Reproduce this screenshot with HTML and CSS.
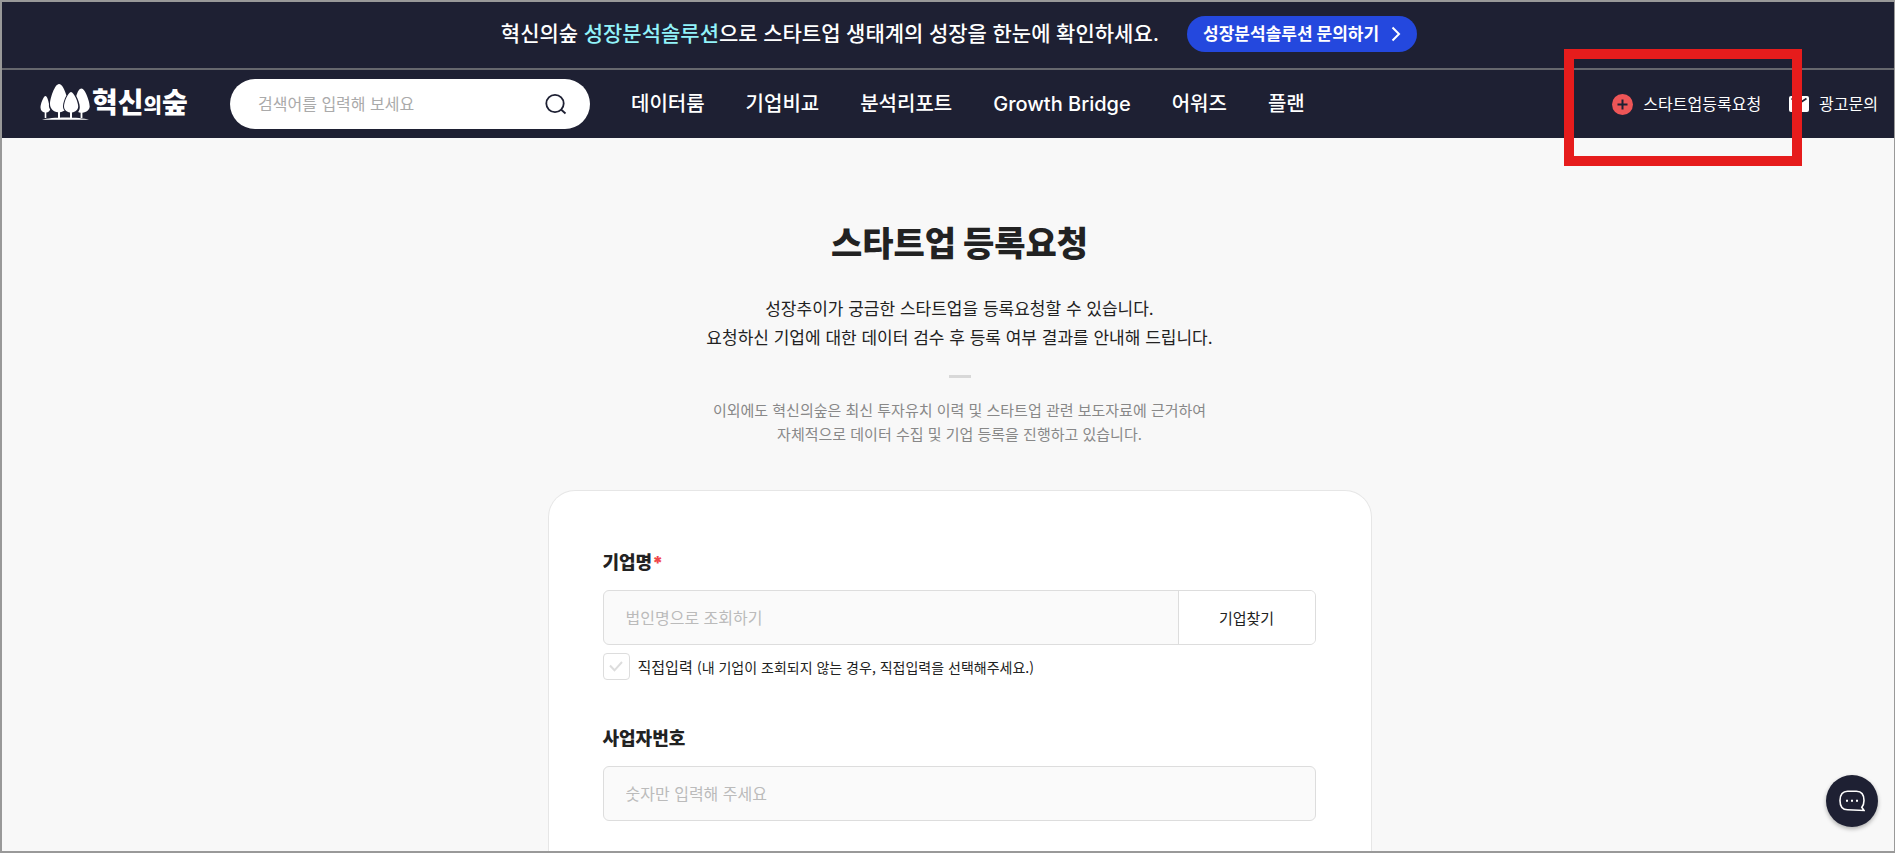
FILE: index.html
```html
<!DOCTYPE html>
<html lang="ko">
<head>
    <meta charset="UTF-8">
    <meta name="viewport" content="width=device-width, initial-scale=1.0">
    <title>스타트업 등록요청 - 혁신의숲</title>
    <link rel="stylesheet" href="styles.css">
</head>
<body>
    <div class="top-banner">
        <p>혁신의숲 <span class="point">성장분석솔루션</span>으로 스타트업 생태계의 성장을 한눈에 확인하세요.</p>
        <a href="#" class="banner-link">성장분석솔루션 문의하기
            <svg width="10" height="16" viewBox="0 0 10 16" fill="none" stroke="#fff" stroke-width="2"><path d="M1.5 1.5 8 8l-6.500 6.500"/></svg>
        </a>
    </div>

    <header class="header">
        <a href="#" class="logo">
            <svg width="50" height="36" viewBox="0 0 50 36" fill="#fff">
                <path d="M5.500 12C3.500 12 .5 20 .5 23.500c0 3 2 4.700 4.200 4.900V34h1.600v-5.600c2-.2 3.400-1.400 3.900-3C9 24 8.800 22 9 20 8.200 16 7 12 5.500 12z"/>
                <path d="M41.500 4.500c-2.300 0-4 3.500-5.200 7.500 1.800 3.500 3.500 8 3.500 11 0 2-.6 3.700-1.700 5 .8.400 1.600.6 2.500.7V34h1.800v-5.300c4-.4 7.300-2.700 7.300-6.500 0-5-4.700-17.700-8.200-17.700z"/>
                <path d="M19 0c-4.300 0-9 14.500-9 20 0 4.700 3.500 7.800 8 8.200V34h2v-5.800c1.700-.1 3.300-.7 4.600-1.600-1-1.200-1.600-2.700-1.600-4.400 0-3 1.600-7.600 3.400-10.800C24.600 5.500 22 0 19 0z"/>
                <path d="M31 8c-2.800 0-7 10-7 14.200 0 3.600 2.700 5.900 6 6.200V34h2v-5.600c3.300-.3 6.200-2.600 6.200-6.200C38.200 18 33.800 8 31 8z"/>
                <path d="M2 35.800c9-3 38-3 47 0z"/>
            </svg>
            <span class="logo-text">혁신<small>의</small>숲</span>
        </a>

        <form class="search" action="#">
            <input type="text" placeholder="검색어를 입력해 보세요" aria-label="검색어">
            <button type="submit" aria-label="검색">
                <svg width="22" height="22" viewBox="0 0 22 22" fill="none" stroke="#1e2033" stroke-width="1.800"><circle cx="10" cy="10.500" r="8.700"/><path d="m16 16.500 4.500 4"/></svg>
            </button>
        </form>

        <nav class="menu">
            <a href="#">데이터룸</a>
            <a href="#">기업비교</a>
            <a href="#">분석리포트</a>
            <a href="#">Growth Bridge</a>
            <a href="#">어워즈</a>
            <a href="#">플랜</a>
        </nav>

        <div class="util">
            <a href="#">
                <svg width="21" height="21" viewBox="0 0 21 21"><circle cx="10.500" cy="10.500" r="10.500" fill="#ee5557"/><path d="M10.500 5.500v10M5.500 10.500h10" stroke="#1e2033" stroke-width="2"/></svg>
                스타트업등록요청
            </a>
            <a href="#">
                <svg width="20" height="16" viewBox="0 0 20 16"><rect width="20" height="16" rx="2" fill="#fff"/><path d="m2.500 2.500 7.500 5 7.500-5" fill="none" stroke="#1e2033" stroke-width="1.800"/></svg>
                광고문의
            </a>
        </div>
        <div class="highlight"></div>
    </header>

    <main>
        <h1>스타트업 등록요청</h1>
        <p class="desc">성장추이가 궁금한 스타트업을 등록요청할 수 있습니다.<br>요청하신 기업에 대한 데이터 검수 후 등록 여부 결과를 안내해 드립니다.</p>
        <hr>
        <p class="sub-desc">이외에도 혁신의숲은 최신 투자유치 이력 및 스타트업 관련 보도자료에 근거하여<br>자체적으로 데이터 수집 및 기업 등록을 진행하고 있습니다.</p>

        <form class="card" action="#" method="post">
            <div class="form-group">
                <label class="title" for="company">기업명<span class="required">*</span></label>
                <div class="input-row">
                    <input type="text" id="company" name="company" placeholder="법인명으로 조회하기">
                    <button type="button">기업찾기</button>
                </div>
                <div class="check-row">
                    <span class="check-box">
                        <input type="checkbox" id="direct" name="direct">
                        <svg width="14" height="11" viewBox="0 0 14 11" fill="none" stroke="#ddd" stroke-width="2"><path d="m1 4.500 4.500 4.800L13 1"/></svg>
                    </span>
                    <label for="direct">직접입력 <small>(내 기업이 조회되지 않는 경우, 직접입력을 선택해주세요.)</small></label>
                </div>
            </div>
            <div class="form-group">
                <label class="title" for="bizNo">사업자번호</label>
                <div class="input-row">
                    <input type="text" id="bizNo" name="bizNo" placeholder="숫자만 입력해 주세요">
                </div>
            </div>
        </form>
    </main>

    <button type="button" class="chat" aria-label="채팅 상담">
        <svg width="26" height="22" viewBox="0 0 26 22" fill="none" stroke="#fff" stroke-width="1.600"><path d="M25 20.500 22.800 17.300C24.300 15.500 25 13.300 25 10.500 25 4.500 22 1.200 17.500 1.200h-9C4 1.200 1 4.500 1 10.500s3 9.300 7.500 9.300z"/><path d="M7 10.800h2M12 10.800h2M17 10.800h2" stroke-width="2"/></svg>
    </button>
</body>
</html>
```
FILE: styles.css
```css
* {
    box-sizing: border-box;
}

body {
    display: flex;
    flex-direction: column;
    min-height: 100vh;
    margin: 0;
    border: 2px solid #999;
    border-right-width: 1px;
    background: #f8f8f8;
    color: #222;
    font-family: Inter, "Noto Sans CJK KR", sans-serif;
    font-size: 16px;
}

a {
    color: inherit;
    text-decoration: none;
}

p {
    margin: 0;
}

input, button {
    font: inherit;
    color: inherit;
}

button {
    cursor: pointer;
}

svg {
    flex-shrink: 0;
}

/* 상단 배너 */
.top-banner {
    display: flex;
    justify-content: center;
    gap: 28px;
    height: 68px;
    padding: 14px 0 0 22px;
    border-bottom: 2px solid #66676d;
    background: #1e2033;
    color: #fff;
    font-size: 21px;
    font-weight: 500;
    line-height: 36px;
    white-space: nowrap;
}

.point {
    color: #92f3fa;
}

.banner-link {
    display: flex;
    align-items: center;
    gap: 12px;
    height: 36px;
    padding: 0 16px;
    border-radius: 18px;
    background: #2448de;
    font-size: 17px;
    font-weight: 700;
}

/* 헤더 */
.header {
    position: relative;
    display: flex;
    align-items: center;
    height: 68px;
    padding: 0 16px 0 38px;
    background: #1e2033;
    color: #fff;
    white-space: nowrap;
}

.logo {
    display: flex;
    align-items: flex-end;
    gap: 2px;
    width: 190px;
    height: 36px;
    margin-bottom: 4px;
}

.logo-text {
    font-size: 28px;
    font-weight: 900;
    line-height: 28px;
}

.logo-text small {
    font-size: 20px;
}

.search {
    display: flex;
    align-items: center;
    width: 360px;
    height: 50px;
    padding: 0 23px 0 28px;
    border-radius: 25px;
    background: #fff;
}

.search input {
    flex: 1;
    min-width: 0;
    padding: 0;
    border: 0;
    outline: 0;
    background: none;
    color: #222;
}

.search input::placeholder {
    color: #aaa;
}

.search button {
    display: flex;
    padding: 0;
    border: 0;
    background: none;
}

.menu {
    display: flex;
    align-items: baseline;
    gap: 41px;
    margin-left: 41px;
    font-size: 20px;
    font-weight: 500;
    line-height: 32px;
}

.util {
    display: flex;
    gap: 28px;
    margin-left: auto;
    line-height: 22px;
}

.util a {
    display: flex;
    align-items: center;
    gap: 10px;
}

.highlight {
    position: absolute;
    top: -21px;
    right: 92px;
    width: 238px;
    height: 117px;
    border: 10px solid #e61c1c;
    pointer-events: none;
}

/* 본문 */
main {
    display: flex;
    flex: 1;
    flex-direction: column;
    align-items: center;
    padding: 82px 0 0 23px;
    text-align: center;
}

h1 {
    margin: 0 0 27px;
    font-size: 34px;
    font-weight: 900;
    line-height: 48px;
}

.desc {
    font-size: 17px;
    line-height: 29px;
}

hr {
    width: 22px;
    height: 3px;
    margin: 22px 0 20px;
    border: 0;
    background: #d8d8d8;
}

.sub-desc {
    color: #888;
    font-family: "Noto Sans CJK KR", sans-serif;
    font-size: 15px;
    line-height: 24px;
}

.card {
    flex: 1;
    width: 824px;
    max-width: 100%;
    margin-top: 44px;
    padding: 57px 55px 30px 54px;
    border: 1px solid #e6e6e6;
    border-bottom: 0;
    border-radius: 27px 27px 0 0;
    background: #fff;
    text-align: left;
}

.form-group + .form-group {
    margin-top: 44px;
}

.title {
    display: block;
    margin-bottom: 12px;
    font-size: 18px;
    font-weight: 900;
    line-height: 30px;
}

.required {
    color: #f0484c;
}

.input-row {
    display: flex;
    height: 55px;
    border: 1px solid #ddd;
    border-radius: 6px;
    background: #fafafa;
    overflow: hidden;
}

.input-row input {
    flex: 1;
    min-width: 0;
    padding: 0 22px;
    border: 0;
    background: none;
}

.input-row input::placeholder {
    color: #bbb;
}

.input-row button {
    width: 137px;
    border: 0;
    border-left: 1px solid #ddd;
    background: #fff;
    font-size: 15px;
}

.check-row {
    display: flex;
    align-items: center;
    gap: 8px;
    margin-top: 8px;
    font-family: "Noto Sans CJK KR", sans-serif;
    font-size: 15px;
    line-height: 20px;
}

.check-row small {
    font-size: 14px;
}

.check-box {
    display: grid;
    place-items: center;
}

.check-box > * {
    grid-area: 1 / 1;
}

.check-box input {
    width: 27px;
    height: 27px;
    margin: 0;
    border: 1px solid #ddd;
    border-radius: 4px;
    background: #fff;
    appearance: none;
}

.check-box svg {
    pointer-events: none;
}

.check-box input:checked + svg {
    stroke: #2448de;
}

.chat {
    position: fixed;
    right: 17px;
    bottom: 26px;
    display: flex;
    align-items: center;
    justify-content: center;
    width: 52px;
    height: 52px;
    padding: 0;
    border: 0;
    border-radius: 50%;
    background: #1e2033;
    box-shadow: 0 2px 4px rgba(0, 0, 0, 0.3);
}
```
